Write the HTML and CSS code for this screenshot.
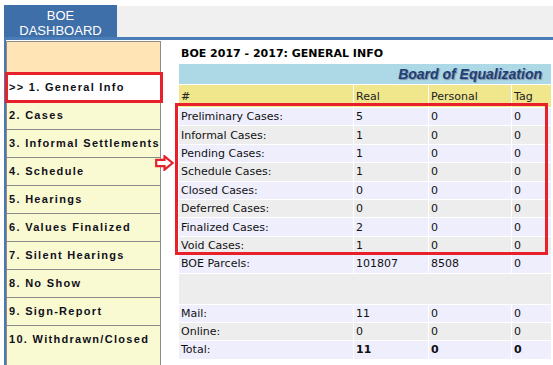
FILE: index.html
```html
<!DOCTYPE html>
<html>
<head>
<meta charset="utf-8">
<link rel="stylesheet" href="styles.css">
</head>
<body>
<div class="page">
  <div class="topbar">
    <div class="tab">BOE<br>DASHBOARD</div>
    <div class="filler"></div>
  </div>
  <div class="rule"></div>
  <div class="body">
    <nav class="sidebar">
      <div class="side-top"></div>
      <div class="item active">&gt;&gt; 1. General Info</div>
      <div class="item">2. Cases</div>
      <div class="item">3. Informal Settlements</div>
      <div class="item">4. Schedule</div>
      <div class="item">5. Hearings</div>
      <div class="item">6. Values Finalized</div>
      <div class="item">7. Silent Hearings</div>
      <div class="item">8. No Show</div>
      <div class="item">9. Sign-Report</div>
      <div class="item last">10. Withdrawn/Closed</div>
    </nav>
    <main class="main">
      <h1 class="title">BOE 2017 - 2017: GENERAL INFO</h1>
      <table class="info">
        <colgroup>
          <col class="c1"><col class="c2"><col class="c3"><col class="c4">
        </colgroup>
        <thead>
          <tr class="banner"><td colspan="4">Board of Equalization</td></tr>
          <tr class="head"><th>#</th><th>Real</th><th>Personal</th><th>Tag</th></tr>
        </thead>
        <tbody>
          <tr class="lav"><td>Preliminary Cases:</td><td>5</td><td>0</td><td>0</td></tr>
          <tr class="gry"><td>Informal Cases:</td><td>1</td><td>0</td><td>0</td></tr>
          <tr class="lav"><td>Pending Cases:</td><td>1</td><td>0</td><td>0</td></tr>
          <tr class="gry"><td>Schedule Cases:</td><td>1</td><td>0</td><td>0</td></tr>
          <tr class="lav"><td>Closed Cases:</td><td>0</td><td>0</td><td>0</td></tr>
          <tr class="gry"><td>Deferred Cases:</td><td>0</td><td>0</td><td>0</td></tr>
          <tr class="lav"><td>Finalized Cases:</td><td>2</td><td>0</td><td>0</td></tr>
          <tr class="gry"><td>Void Cases:</td><td>1</td><td>0</td><td>0</td></tr>
          <tr class="lav"><td>BOE Parcels:</td><td>101807</td><td>8508</td><td>0</td></tr>
          <tr class="gry spacer"><td colspan="4"></td></tr>
          <tr class="lav"><td>Mail:</td><td>11</td><td>0</td><td>0</td></tr>
          <tr class="gry"><td>Online:</td><td>0</td><td>0</td><td>0</td></tr>
          <tr class="lav total"><td>Total:</td><td>11</td><td>0</td><td>0</td></tr>
        </tbody>
      </table>
    </main>
  </div>
</div>
<div class="mark mark-nav"></div>
<div class="mark mark-table"></div>
<svg class="arrow" width="19" height="16" viewBox="0 0 19 16">
  <polygon points="1.2,4.8 9.5,4.8 9.5,1.3 17.6,8 9.5,14.7 9.5,11.2 1.2,11.2" fill="#fff" stroke="#e8202a" stroke-width="2.2" stroke-linejoin="miter"/>
</svg>
</body>
</html>
```

FILE: styles.css
```css
html, body {
  margin: 0;
  padding: 0;
  background: #fff;
}

body {
  width: 553px;
  height: 365px;
  overflow: hidden;
  position: relative;
  font-family: "DejaVu Sans", Verdana, sans-serif;
}

.page {
  padding: 5px 0 0 4px;
}

.topbar {
  display: flex;
  height: 32px;
}

.tab {
  width: 113px;
  height: 32px;
  box-sizing: border-box;
  background: #3f6fa8;
  color: #fff;
  font: 13px/15px "Liberation Sans", Arial, sans-serif;
  text-align: center;
  padding-top: 3px;
}

.filler {
  flex: 1;
  margin-top: 1px;
  background: #f0f0f0;
}

.rule {
  height: 3px;
  background: #4a7db8;
}

.body {
  display: flex;
  align-items: flex-start;
  border-left: 2px solid #4a78b0;
  padding-top: 1px;
  height: 324px;
  overflow: hidden;
}

.sidebar {
  width: 153px;
  border: 1px solid #8c8c8c;
  background: #fafad2;
  flex: none;
}

.side-top {
  height: 31px;
  background: #ffe4b5;
  border-bottom: 1px solid #8c8c8c;
}

.item {
  height: 27px;
  padding-left: 2px;
  border-bottom: 1px solid #8c8c8c;
  font: bold 11px/27px "Liberation Sans", Arial, sans-serif;
  letter-spacing: 1.3px;
  color: #10101a;
  white-space: nowrap;
  overflow: hidden;
}

.item.active {
  background: #fff;
}

.item.last {
  height: 40px;
  border-bottom: none;
}

.main {
  flex: 1;
  padding: 6px 0 0 17px;
}

.title {
  margin: 0 0 3px 3px;
  font: bold 11px/13px "DejaVu Sans", Verdana, sans-serif;
  color: #000;
}

.info {
  border-collapse: separate;
  border-spacing: 1px;
  table-layout: fixed;
  width: 374px;
  font: 11px/13px "DejaVu Sans", Verdana, sans-serif;
  color: #111;
}

.c1 { width: 174px; }
.c2 { width: 74px; }
.c3 { width: 82px; }
.c4 { width: 39px; }

.info td, .info th {
  padding: 0 2px;
  text-align: left;
  font-weight: normal;
  vertical-align: middle;
  white-space: nowrap;
}

.banner td {
  height: 20px;
  background: #add8e6;
  text-align: right;
  padding-right: 9px;
  font: italic bold 14px/16px "Liberation Sans", Arial, sans-serif;
  color: #1f3f77;
  text-shadow: 1px 1px 1px #7a8ba3;
}

.head th {
  height: 22px;
  background: #f0e68c;
  color: #222;
}

.info tbody td {
  height: 17.4px;
}

.lav td { background: #eeeefd; }
.gry td { background: #ededed; }

.info tbody .spacer td {
  height: 30px;
}

.total td + td {
  font-weight: bold;
}

.mark {
  position: absolute;
  border: 3px solid #e8202a;
  box-sizing: border-box;
}

.mark-nav {
  left: 5px;
  top: 72px;
  width: 158px;
  height: 31px;
}

.mark-table {
  left: 175px;
  top: 103px;
  width: 373px;
  height: 152px;
  border-width: 3.5px;
}

.arrow {
  position: absolute;
  left: 155px;
  top: 155px;
}
```
